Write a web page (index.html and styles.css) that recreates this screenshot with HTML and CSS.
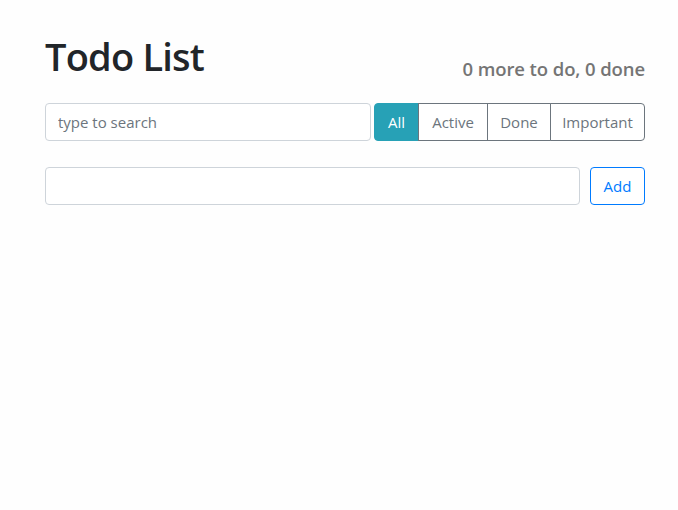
FILE: index.html
```html
<!DOCTYPE html>
<html>
<head>
<meta charset="utf-8">
<link rel="stylesheet" href="styles.css">
</head>
<body>
<div class="app">
  <header class="app-header">
    <h1 class="title">Todo List</h1>
    <h2 class="status">0 more to do, 0 done</h2>
  </header>
  <div class="top-panel">
    <input class="form-control search" type="text" placeholder="type to search">
    <div class="btn-group">
      <button class="btn btn-info">All</button>
      <button class="btn btn-outline">Active</button>
      <button class="btn btn-outline">Done</button>
      <button class="btn btn-outline">Important</button>
    </div>
  </div>
  <form class="add-form">
    <input class="form-control add-input" type="text">
    <button class="btn btn-outline-primary" type="button">Add</button>
  </form>
</div>
</body>
</html>
```
FILE: styles.css
```css
html, body {
  margin: 0;
  padding: 0;
  background: #fefefe;
}
body {
  font-family: "Open Sans", "Noto Sans", sans-serif;
  color: #212529;
  font-size: 16px;
}
.app {
  width: 600px;
  margin-left: 45px;
  padding-top: 30px;
}
.app-header {
  display: flex;
  justify-content: space-between;
  align-items: baseline;
  height: 73px;
}
.title {
  margin: 0;
  font-size: 38px;
  font-weight: 600;
  letter-spacing: -0.8px;
  line-height: 52px;
}
.status {
  align-self: flex-end;
  margin: 0 0 22px 0;
  font-size: 18.5px;
  line-height: 24px;
  font-weight: 600;
  color: #757575;
  letter-spacing: -0.1px;
}
.top-panel {
  display: flex;
  gap: 3px;
  height: 38px;
}
.form-control {
  box-sizing: border-box;
  height: 38px;
  border: 1px solid #ced4da;
  border-radius: 4px;
  padding: 6px 12px;
  font-family: inherit;
  font-size: 15px;
  color: #495057;
  background: #fff;
  outline: none;
}
.form-control::placeholder {
  color: #6c757d;
}
.search {
  width: 326px;
}
.btn-group {
  display: flex;
  flex: 1;
}
.btn {
  box-sizing: border-box;
  height: 38px;
  font-family: inherit;
  font-size: 15px;
  padding: 0 11px;
  background: #fff;
  cursor: pointer;
}
.btn-group .btn {
  border: 1px solid #6c757d;
  border-radius: 0;
  margin-left: -1px;
  color: #6c757d;
}
.btn-group .btn:first-child {
  margin-left: 0;
  border-radius: 4px 0 0 4px;
}
.btn-group .btn:last-child {
  border-radius: 0 4px 4px 0;
  flex: 1;
}
.btn-group .btn-info {
  background: #27a1b6;
  border-color: #27a1b6;
  color: #fff;
  width: 45px;
}
.btn-group .btn:nth-child(2) { width: 70px; }
.btn-group .btn:nth-child(3) { width: 64px; }
.add-form {
  display: flex;
  gap: 10px;
  margin-top: 26px;
}
.add-input {
  flex: 1;
}
.btn-outline-primary {
  border: 1px solid #007bff;
  border-radius: 4px;
  color: #007bff;
  width: 55px;
  padding: 0;
}
```
